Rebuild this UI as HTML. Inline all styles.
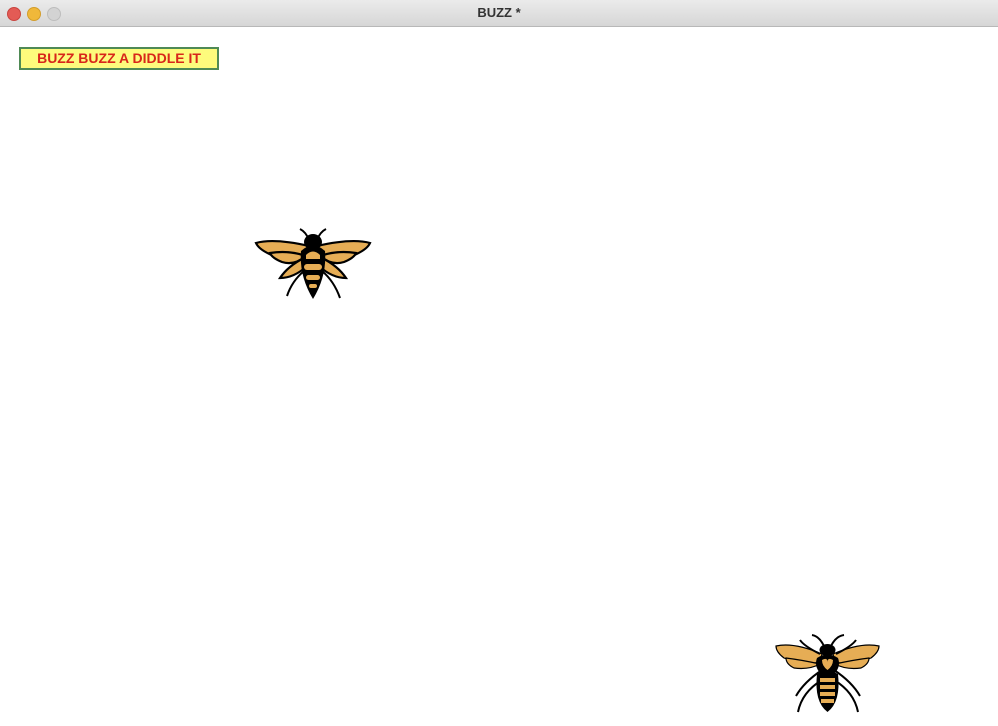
<!DOCTYPE html>
<html><head><meta charset="utf-8"><style>
html,body{margin:0;padding:0;width:998px;height:726px;overflow:hidden;background:#fff;font-family:"Liberation Sans",sans-serif}
.tb{position:absolute;left:0;top:0;width:998px;height:26px;background:linear-gradient(#ebebeb,#d6d6d6);border-bottom:1px solid #b8b8b8}
.tb .t{position:absolute;left:0;right:0;top:5px;text-align:center;font-size:13px;font-weight:bold;color:#333}
.d{position:absolute;top:7px;width:12px;height:12px;border-radius:50%}
.lab{position:absolute;left:19px;top:47px;width:196px;height:19px;border:2px solid #4f8a55;background:#fdfb7c;color:#d8261a;font-weight:bold;font-size:14px;line-height:19px;text-align:center}
svg{position:absolute}
</style></head><body>
<div class="tb"><div class="d" style="left:7px;background:#e35b55;border:0.5px solid #c9443f"></div><div class="d" style="left:27px;background:#f0b83a;border:0.5px solid #d39d2a"></div><div class="d" style="left:47px;background:#d3d3d3;border:0.5px solid #bdbdbd"></div><div class="t">BUZZ *</div></div>
<div class="lab">BUZZ BUZZ A DIDDLE IT</div>

<svg style="left:254px;top:226px" width="120" height="75" viewBox="0 0 120 75">
<g stroke="#000" stroke-width="2.2" fill="#e6ad55">
<path d="M2 17 Q20 12 55 20 L52 30 Q40 38 20 30 Q5 24 2 17Z"/>
<path d="M116 17 Q98 12 63 20 L66 30 Q78 38 98 30 Q113 24 116 17Z"/>
<path d="M16 27 Q35 24 52 30 Q40 40 28 36 Q18 32 16 27Z"/>
<path d="M102 27 Q83 24 66 30 Q78 40 90 36 Q100 32 102 27Z"/>
<path d="M50 32 Q34 40 26 52 Q40 52 53 40Z"/>
<path d="M68 32 Q84 40 92 52 Q78 52 65 40Z"/>
</g>
<g stroke="#000" stroke-width="2" fill="none">
<path d="M55 14 Q52 6 46 3"/><path d="M63 14 Q66 6 72 3"/>
<path d="M50 45 Q38 55 33 70"/><path d="M68 45 Q80 55 86 72"/>
</g>
<ellipse cx="59" cy="16" rx="9" ry="8" fill="#000"/>
<path d="M47 25 Q59 14 71 25 Q73 50 59 73 Q45 50 47 25Z" fill="#000"/>
<g fill="#e6ad55"><path d="M52 29 Q59 22 66 29 L66 33 L52 33Z"/><rect x="50" y="38" width="18" height="6" rx="3"/><rect x="52" y="49" width="14" height="5" rx="2.5"/><rect x="55" y="58" width="8" height="4" rx="2"/></g>
</svg>

<svg style="left:774px;top:632px" width="108" height="82" viewBox="0 0 108 82">
<g stroke="#000" stroke-width="1.2" fill="#e6ad55">
<path d="M2 14 Q20 10 48 22 L46 30 Q30 34 10 26 Q2 20 2 14Z"/>
<path d="M105 14 Q87 10 59 22 L61 30 Q77 34 97 26 Q105 20 105 14Z"/>
<path d="M12 26 Q28 28 46 32 Q35 38 20 36 Q12 32 12 26Z"/>
<path d="M95 26 Q79 28 61 32 Q72 38 87 36 Q95 32 95 26Z"/>
</g>
<g stroke="#000" stroke-width="2" fill="none">
<path d="M50 14 Q45 4 38 3"/><path d="M57 14 Q62 4 70 3"/>
<path d="M48 38 Q30 50 22 64"/><path d="M48 48 Q28 60 24 80"/><path d="M60 38 Q78 50 86 64"/><path d="M60 48 Q80 60 84 80"/>
<path d="M46 22 Q30 14 26 8"/><path d="M62 22 Q78 14 82 8"/>
</g>
<ellipse cx="53.5" cy="18" rx="8" ry="6" fill="#000"/>
<path d="M43 26 Q53.5 19 64 26 Q67 34 61 41 L46 41 Q40 34 43 26Z" fill="#000"/>
<path d="M48 28 Q53.5 25 53.5 30 Q53.5 25 59 28 Q59 34 53.5 38 Q48 34 48 28Z" fill="#e6ad55"/>
<path d="M43 42 Q53.5 36 64 42 Q67 70 53.5 80 Q40 70 43 42Z" fill="#000"/>
<g fill="#e6ad55"><rect x="46" y="46" width="15" height="4"/><rect x="46" y="53" width="15" height="4"/><rect x="46" y="60" width="15" height="4"/><rect x="47" y="67" width="13" height="4"/></g>
</svg>
</body></html>
